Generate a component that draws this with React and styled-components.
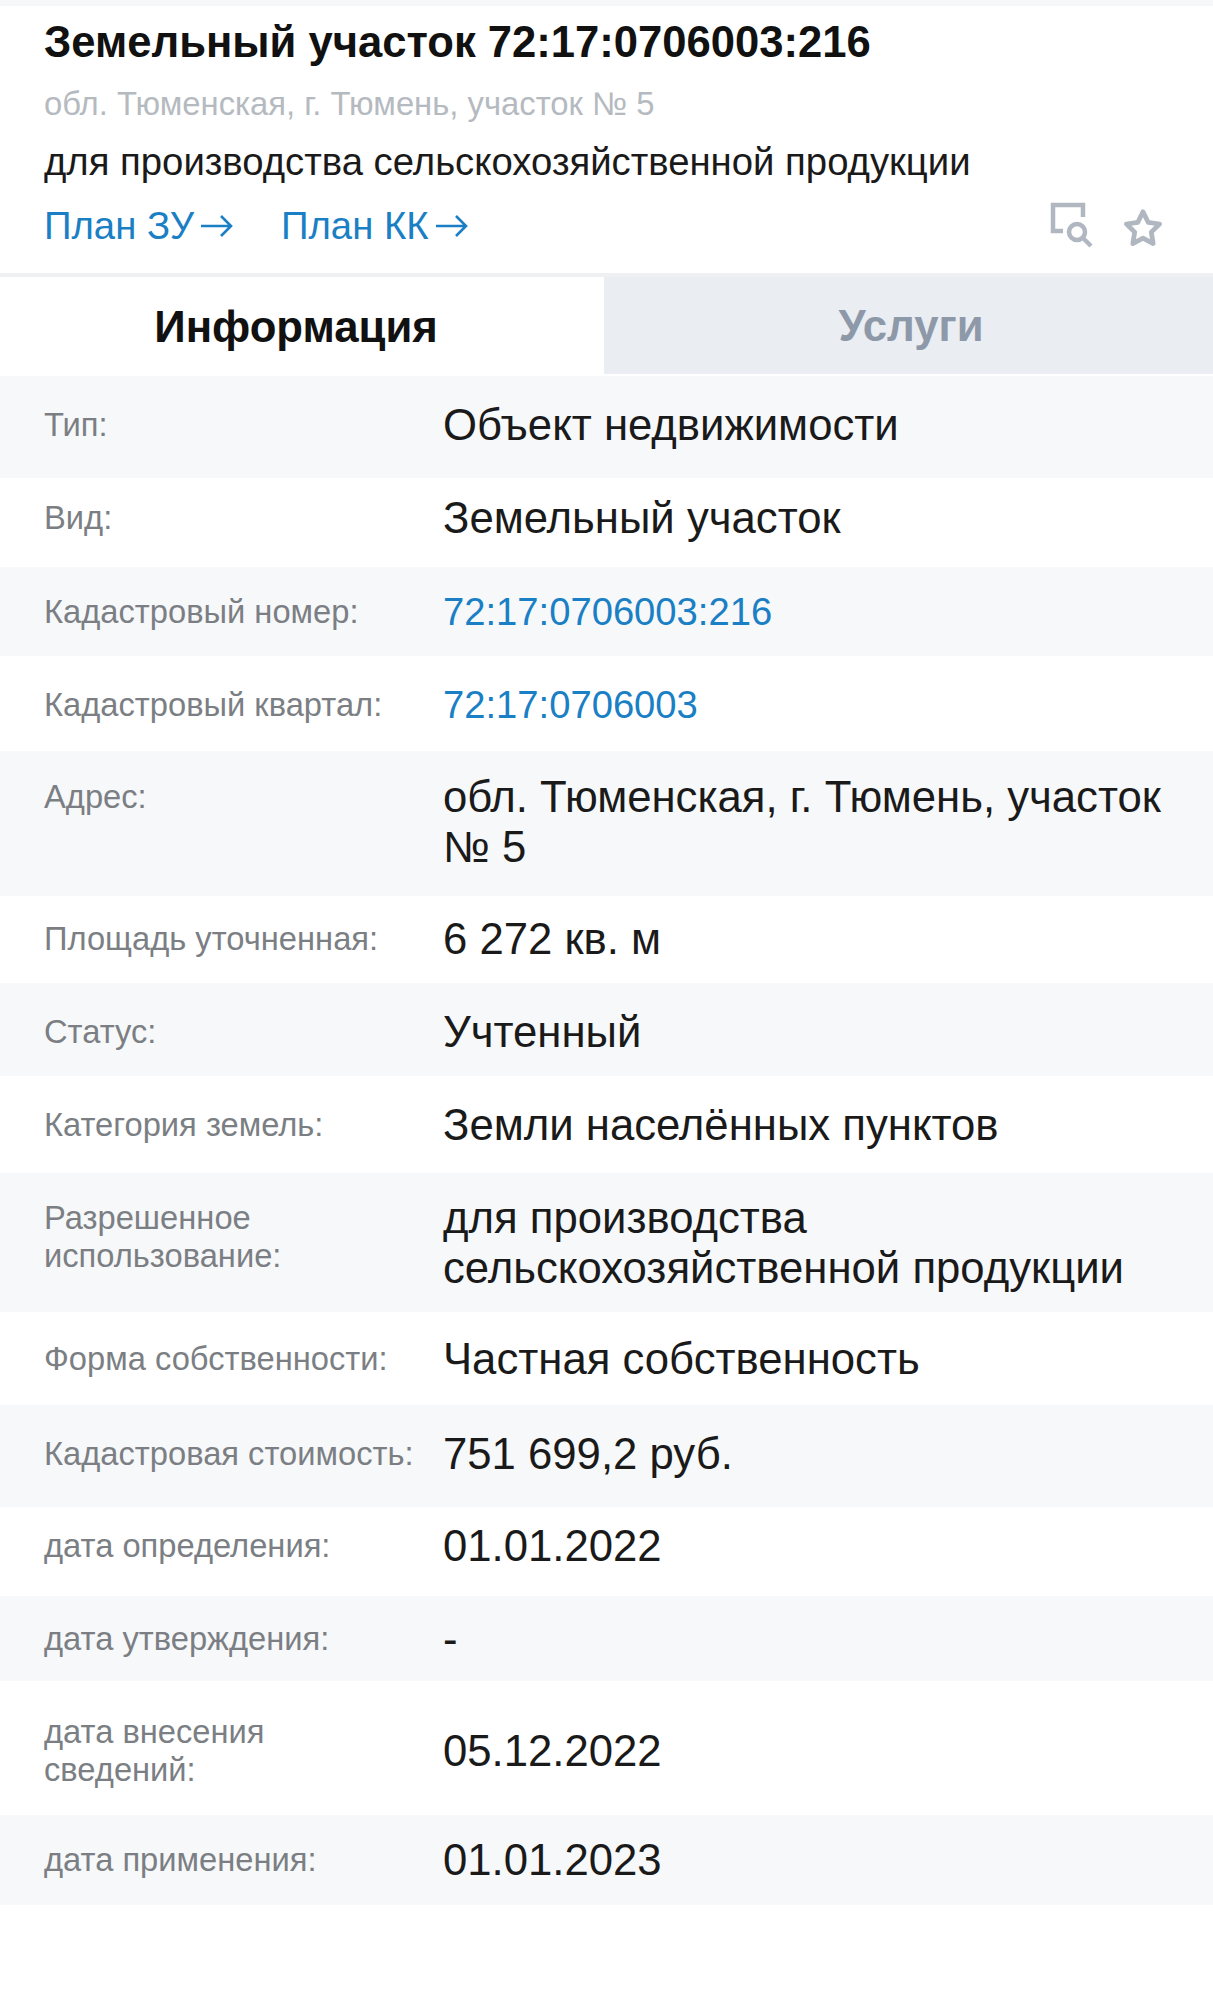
import React from 'react';
import styled, { createGlobalStyle } from 'styled-components';

const rows = [
  { label: 'Тип:', value: 'Объект недвижимости', h: 102, nudge: -2.5 },
  { label: 'Вид:', value: 'Земельный участок', h: 89, nudge: -5 },
  { label: 'Кадастровый номер:', value: '72:17:0706003:216', link: true, h: 89 },
  { label: 'Кадастровый квартал:', value: '72:17:0706003', link: true, h: 95, nudge: 1 },
  { label: 'Адрес:', value: 'обл. Тюменская, г. Тюмень, участок № 5', top: true, h: 145, nudge: -1.5 },
  { label: 'Площадь уточненная:', value: '6 272 кв. м', h: 87, nudge: -1 },
  { label: 'Статус:', value: 'Учтенный', h: 93, nudge: 2.5 },
  { label: 'Категория земель:', value: 'Земли населённых пунктов', h: 97 },
  { label: 'Разрешенное использование:', value: 'для производства сельскохозяйственной продукции', top: true, h: 139 },
  { label: 'Форма собственности:', value: 'Частная собственность', h: 93 },
  { label: 'Кадастровая стоимость:', value: '751 699,2 руб.', h: 102, nudge: -2.5 },
  { label: 'дата определения:', value: '01.01.2022', h: 89, nudge: -6 },
  { label: 'дата утверждения:', value: '-', h: 85 },
  { label: 'дата внесения сведений:', value: '05.12.2022', h: 134, nudge: 2.5 },
  { label: 'дата применения:', value: '01.01.2023', h: 90 },
];

const GlobalStyle = createGlobalStyle`
  html, body {
    margin: 0;
    padding: 0;
    background: #fff;
    font-family: "Liberation Sans", Arial, sans-serif;
  }
`;

const Page = styled.div`
  width: 1213px;
  height: 2000px;
  overflow: hidden;
`;

const Head = styled.header`
  height: 277px;
  padding: 11px 44px 0;
  box-sizing: border-box;
  border-top: 6px solid #f6f7f8;
  border-bottom: 4px solid #eef0f2;
  position: relative;
`;

const Title = styled.h1`
  margin: 0;
  font-size: 43.6px;
  line-height: 50px;
  font-weight: 700;
  color: #111;
`;

const Address = styled.div`
  margin-top: 17px;
  font-size: 32.8px;
  line-height: 40px;
  color: #b5bac0;
`;

const Purpose = styled.div`
  margin-top: 17px;
  font-size: 38.3px;
  line-height: 42px;
  color: #1a1a1a;
`;

const Links = styled.div`
  display: flex;
  align-items: center;
  gap: 47px;
  margin-top: 20px;
`;

const PlanLink = styled.a`
  display: flex;
  align-items: center;
  gap: 6px;
  font-size: 38.3px;
  line-height: 46px;
  color: #1a7fc4;
`;

const Actions = styled.div`
  display: flex;
  align-items: flex-end;
  gap: 27px;
  position: absolute;
  right: 50px;
  bottom: 25px;
  color: #b0b7c0;
`;

const Tabs = styled.div`
  display: flex;
  height: 99px;
`;

const Tab = styled.div`
  flex: ${p => (p.$active ? '0 0 604px' : '1')};
  display: flex;
  align-items: center;
  justify-content: center;
  margin-bottom: ${p => (p.$active ? '0' : '2px')};
  padding: ${p => (p.$active ? '0 12px 0 0' : '0 0 0 5px')};
  box-sizing: border-box;
  font-size: 43.7px;
  font-weight: 700;
  color: ${p => (p.$active ? '#111' : '#8d99a8')};
  background: ${p => (p.$active ? '#fff' : '#eaedf2')};
`;

const Row = styled.div`
  display: grid;
  grid-template-columns: 399px 1fr;
  align-items: ${p => (p.$top ? 'start' : 'center')};
  align-content: center;
  height: ${p => p.$h}px;
  padding: ${p => Math.max(p.$nudge * 2, 0)}px 44px ${p => Math.max(-p.$nudge * 2, 0)}px;
  box-sizing: border-box;
  background: ${p => (p.$odd ? '#f7f8fa' : '#fff')};
`;

const Label = styled.div`
  margin-top: ${p => (p.$top ? '6px' : '0')};
  font-size: 32.7px;
  line-height: 38px;
  color: #7b7f84;
  padding-right: 24px;
`;

const Value = styled.div`
  font-size: ${p => (p.$link ? '38.2px' : '43.7px')};
  line-height: 50px;
  color: ${p => (p.$link ? '#1a7fc4' : '#1a1a1a')};
`;

const ArrowIcon = () => (
  <svg width="34" height="26" viewBox="0 0 34 26" fill="none" stroke="currentColor" strokeWidth="2.6">
    <path d="M1 13h30M21 3l10 10-10 10" />
  </svg>
);

const SearchDocIcon = () => (
  <svg width="46" height="46" viewBox="0 0 46 46" fill="none" stroke="currentColor" strokeWidth="4.5">
    <path d="M13 29H3V3h30v12" />
    <circle cx="27" cy="30" r="8" />
    <path d="M33 36l8 8" />
  </svg>
);

const StarIcon = () => (
  <svg width="40" height="40" viewBox="0 0 42 42" fill="none" stroke="currentColor" strokeWidth="5" strokeLinejoin="round">
    <path d="M21 4l5.4 11 12 1.8-8.7 8.5 2 12L21 31.6 10.3 37.3l2-12L3.6 16.8l12-1.8z" />
  </svg>
);

export default function App() {
  return (
    <Page>
      <GlobalStyle />
      <Head>
        <Title>Земельный участок 72:17:0706003:216</Title>
        <Address>обл. Тюменская, г. Тюмень, участок № 5</Address>
        <Purpose>для производства сельскохозяйственной продукции</Purpose>
        <Links>
          <PlanLink>План ЗУ<ArrowIcon /></PlanLink>
          <PlanLink>План КК<ArrowIcon /></PlanLink>
        </Links>
        <Actions>
          <SearchDocIcon />
          <StarIcon />
        </Actions>
      </Head>
      <Tabs>
        <Tab $active>Информация</Tab>
        <Tab>Услуги</Tab>
      </Tabs>
      {rows.map((r, i) => (
        <Row key={r.label} $odd={i % 2 === 0} $top={r.top} $h={r.h} $nudge={r.nudge || 0}>
          <Label $top={r.top}>{r.label}</Label>
          <Value $link={r.link}>{r.value}</Value>
        </Row>
      ))}
    </Page>
  );
}
